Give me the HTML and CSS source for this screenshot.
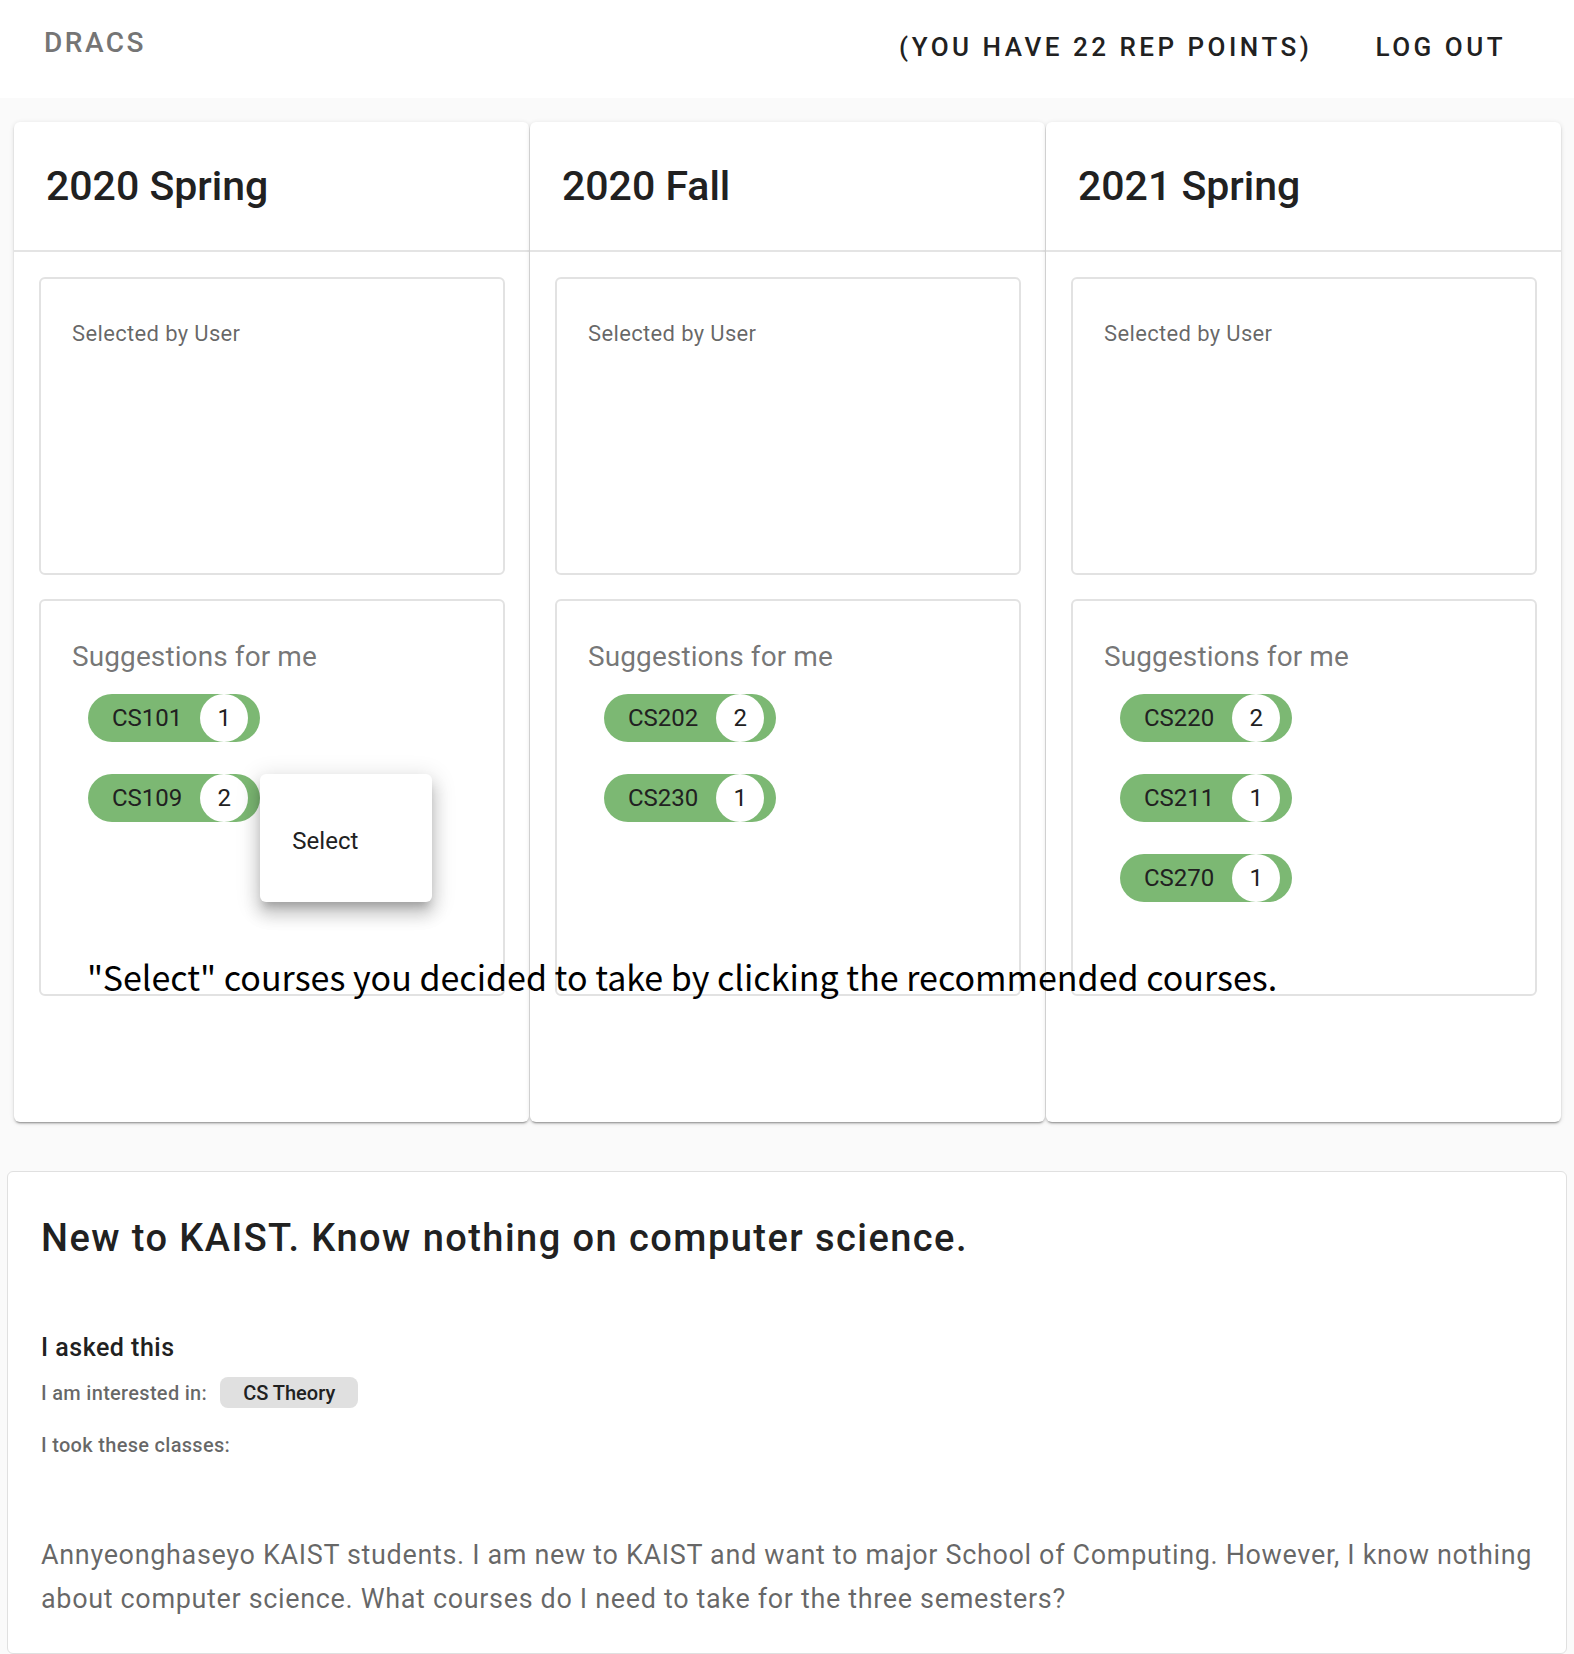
FILE: index.html
```html
<!DOCTYPE html>
<html lang="en">
<head>
<meta charset="utf-8">
<title>DRACS</title>
<link rel="stylesheet" href="styles.css">
</head>
<body>
<header class="topbar">
  <div class="brand">DRACS</div>
  <nav class="nav">
    <span class="nav-item">(You have 22 rep points)</span>
    <span class="nav-item">Log out</span>
  </nav>
</header>

<main class="semesters">
  <section class="card">
    <h2 class="card-title">2020 Spring</h2>
    <div class="card-body">
      <div class="box box-selected"><div class="box-label">Selected by User</div></div>
      <div class="box box-suggest">
        <div class="suggest-title">Suggestions for me</div>
        <div class="chips">
          <div class="chip-wrap"><span class="chip"><span class="chip-text">CS101</span><span class="chip-avatar">1</span></span></div>
          <div class="chip-wrap">
            <span class="chip"><span class="chip-text">CS109</span><span class="chip-avatar">2</span></span>
            <div class="menu"><span class="menu-item">Select</span></div>
          </div>
        </div>
        <p class="hint">"Select" courses you decided to take by clicking the recommended courses.</p>
      </div>
    </div>
  </section>
  <section class="card">
    <h2 class="card-title">2020 Fall</h2>
    <div class="card-body">
      <div class="box box-selected"><div class="box-label">Selected by User</div></div>
      <div class="box box-suggest">
        <div class="suggest-title">Suggestions for me</div>
        <div class="chips">
          <div class="chip-wrap"><span class="chip"><span class="chip-text">CS202</span><span class="chip-avatar">2</span></span></div>
          <div class="chip-wrap"><span class="chip"><span class="chip-text">CS230</span><span class="chip-avatar">1</span></span></div>
        </div>
      </div>
    </div>
  </section>
  <section class="card">
    <h2 class="card-title">2021 Spring</h2>
    <div class="card-body">
      <div class="box box-selected"><div class="box-label">Selected by User</div></div>
      <div class="box box-suggest">
        <div class="suggest-title">Suggestions for me</div>
        <div class="chips">
          <div class="chip-wrap"><span class="chip"><span class="chip-text">CS220</span><span class="chip-avatar">2</span></span></div>
          <div class="chip-wrap"><span class="chip"><span class="chip-text">CS211</span><span class="chip-avatar">1</span></span></div>
          <div class="chip-wrap"><span class="chip"><span class="chip-text">CS270</span><span class="chip-avatar">1</span></span></div>
        </div>
      </div>
    </div>
  </section>
</main>

<section class="question">
  <h1 class="q-title">New to KAIST. Know nothing on computer science.</h1>
  <h3 class="q-sub">I asked this</h3>
  <div class="q-row">
    <span class="q-label">I am interested in:</span>
    <span class="tag">CS Theory</span>
  </div>
  <div class="q-label q-took">I took these classes:</div>
  <p class="q-body">Annyeonghaseyo KAIST students. I am new to KAIST and want to major School of Computing. However, I know nothing about computer science. What courses do I need to take for the three semesters?</p>
</section>
</body>
</html>
```

FILE: styles.css
```css
* { box-sizing: border-box; }

body {
  margin: 0;
  background: #fafafa;
  font-family: Roboto, "Liberation Sans", sans-serif;
  color: rgba(0, 0, 0, 0.87);
}

.topbar {
  height: 98px;
  background: #fff;
  display: flex;
  align-items: flex-start;
  padding: 0 0 0 44px;
}

.brand {
  padding-top: 27px;
  font-size: 28px;
  line-height: 32px;
  font-weight: 500;
  letter-spacing: 2.5px;
  color: #757575;
}

.nav {
  margin-left: auto;
  display: flex;
  gap: 63px;
  padding: 32px 68px 0 0;
}

.nav-item {
  font-size: 26px;
  line-height: 30px;
  font-weight: 500;
  letter-spacing: 3.5px;
  text-transform: uppercase;
  color: #212121;
}

.semesters {
  display: grid;
  grid-template-columns: repeat(3, minmax(0, 1fr));
  column-gap: 1px;
  padding: 24px 13px 0 14px;
}

.card {
  min-width: 0;
  background: #fff;
  border-radius: 6px;
  box-shadow: 0 3px 1px -2px rgba(0,0,0,.2), 0 2px 2px 0 rgba(0,0,0,.14), 0 1px 5px 0 rgba(0,0,0,.12);
}

.card-title {
  margin: 0;
  padding: 38px 32px 38px;
  font-size: 41px;
  line-height: 52px;
  font-weight: 500;
  color: #212121;
  border-bottom: 2px solid #e4e4e4;
}

.card-body {
  padding: 25px 24px 126px 25px;
  display: flex;
  flex-direction: column;
  gap: 24px;
}

.box {
  border: 2px solid #e2e2e2;
  border-radius: 6px;
  background: #fff;
}

.box-selected {
  height: 298px;
  padding: 40px 31px 0;
}

.box-label {
  font-size: 22px;
  line-height: 30px;
  letter-spacing: 0.35px;
  color: rgba(0, 0, 0, 0.6);
}

.box-suggest {
  height: 397px;
  padding: 38px 31px 0;
}

.suggest-title {
  font-size: 28px;
  line-height: 36px;
  letter-spacing: 0.1px;
  color: rgba(0, 0, 0, 0.55);
}

.chips {
  margin: 19px 0 0 16px;
  display: flex;
  flex-direction: column;
  align-items: flex-start;
  gap: 32px;
}

.chip-wrap {
  position: relative;
  display: flex;
}

.chip {
  display: inline-flex;
  align-items: center;
  height: 48px;
  border-radius: 24px;
  background: #7cb873;
  padding: 0 12px 0 24px;
  font-size: 24px;
  color: #212121;
}

.chip-text { line-height: 48px; }

.chip-avatar {
  margin-left: 18px;
  width: 48px;
  height: 48px;
  border-radius: 50%;
  background: #fff;
  display: flex;
  align-items: center;
  justify-content: center;
  font-size: 24px;
}

.menu {
  position: absolute;
  left: 100%;
  top: 0;
  width: 172px;
  height: 128px;
  background: #fff;
  border-radius: 6px;
  display: flex;
  align-items: center;
  padding-left: 32px;
  z-index: 3;
  box-shadow: 0 8px 8px -4px rgba(0,0,0,.2), 0 12px 16px 2px rgba(0,0,0,.14), 0 5px 22px 4px rgba(0,0,0,.12);
}

.menu-item {
  font-size: 24px;
  color: #212121;
  padding-top: 6px;
}

.hint {
  position: relative;
  z-index: 2;
  margin: 133px 0 0 15px;
  white-space: nowrap;
  font-family: "Noto Sans CJK KR", "Noto Sans", sans-serif;
  font-size: 34px;
  line-height: 44px;
  color: #000;
}

.question {
  margin: 49px 7px 0;
  background: #fff;
  border: 1px solid #e0e0e0;
  border-radius: 6px;
  padding: 42px 33px 32px;
}

.q-title {
  margin: 0;
  font-size: 38px;
  line-height: 48px;
  font-weight: 500;
  letter-spacing: 1.45px;
  color: #212121;
}

.q-sub {
  margin: 70px 0 0;
  font-size: 25px;
  line-height: 32px;
  font-weight: 500;
  letter-spacing: 0.5px;
  color: #212121;
}

.q-row {
  margin-top: 13px;
  display: flex;
  align-items: center;
  gap: 13px;
}

.q-label {
  font-size: 20px;
  line-height: 28px;
  font-weight: 500;
  letter-spacing: 0.3px;
  color: rgba(0, 0, 0, 0.6);
}

.tag {
  display: inline-flex;
  align-items: center;
  height: 31px;
  padding: 0 23px;
  border-radius: 8px;
  background: #e0e0e0;
  font-size: 20px;
  font-weight: 500;
  color: #212121;
}

.q-took { margin-top: 23px; }

.q-body {
  margin: 74px 0 0;
  font-size: 27px;
  line-height: 44px;
  letter-spacing: 0.65px;
  color: rgba(0, 0, 0, 0.6);
}
```
